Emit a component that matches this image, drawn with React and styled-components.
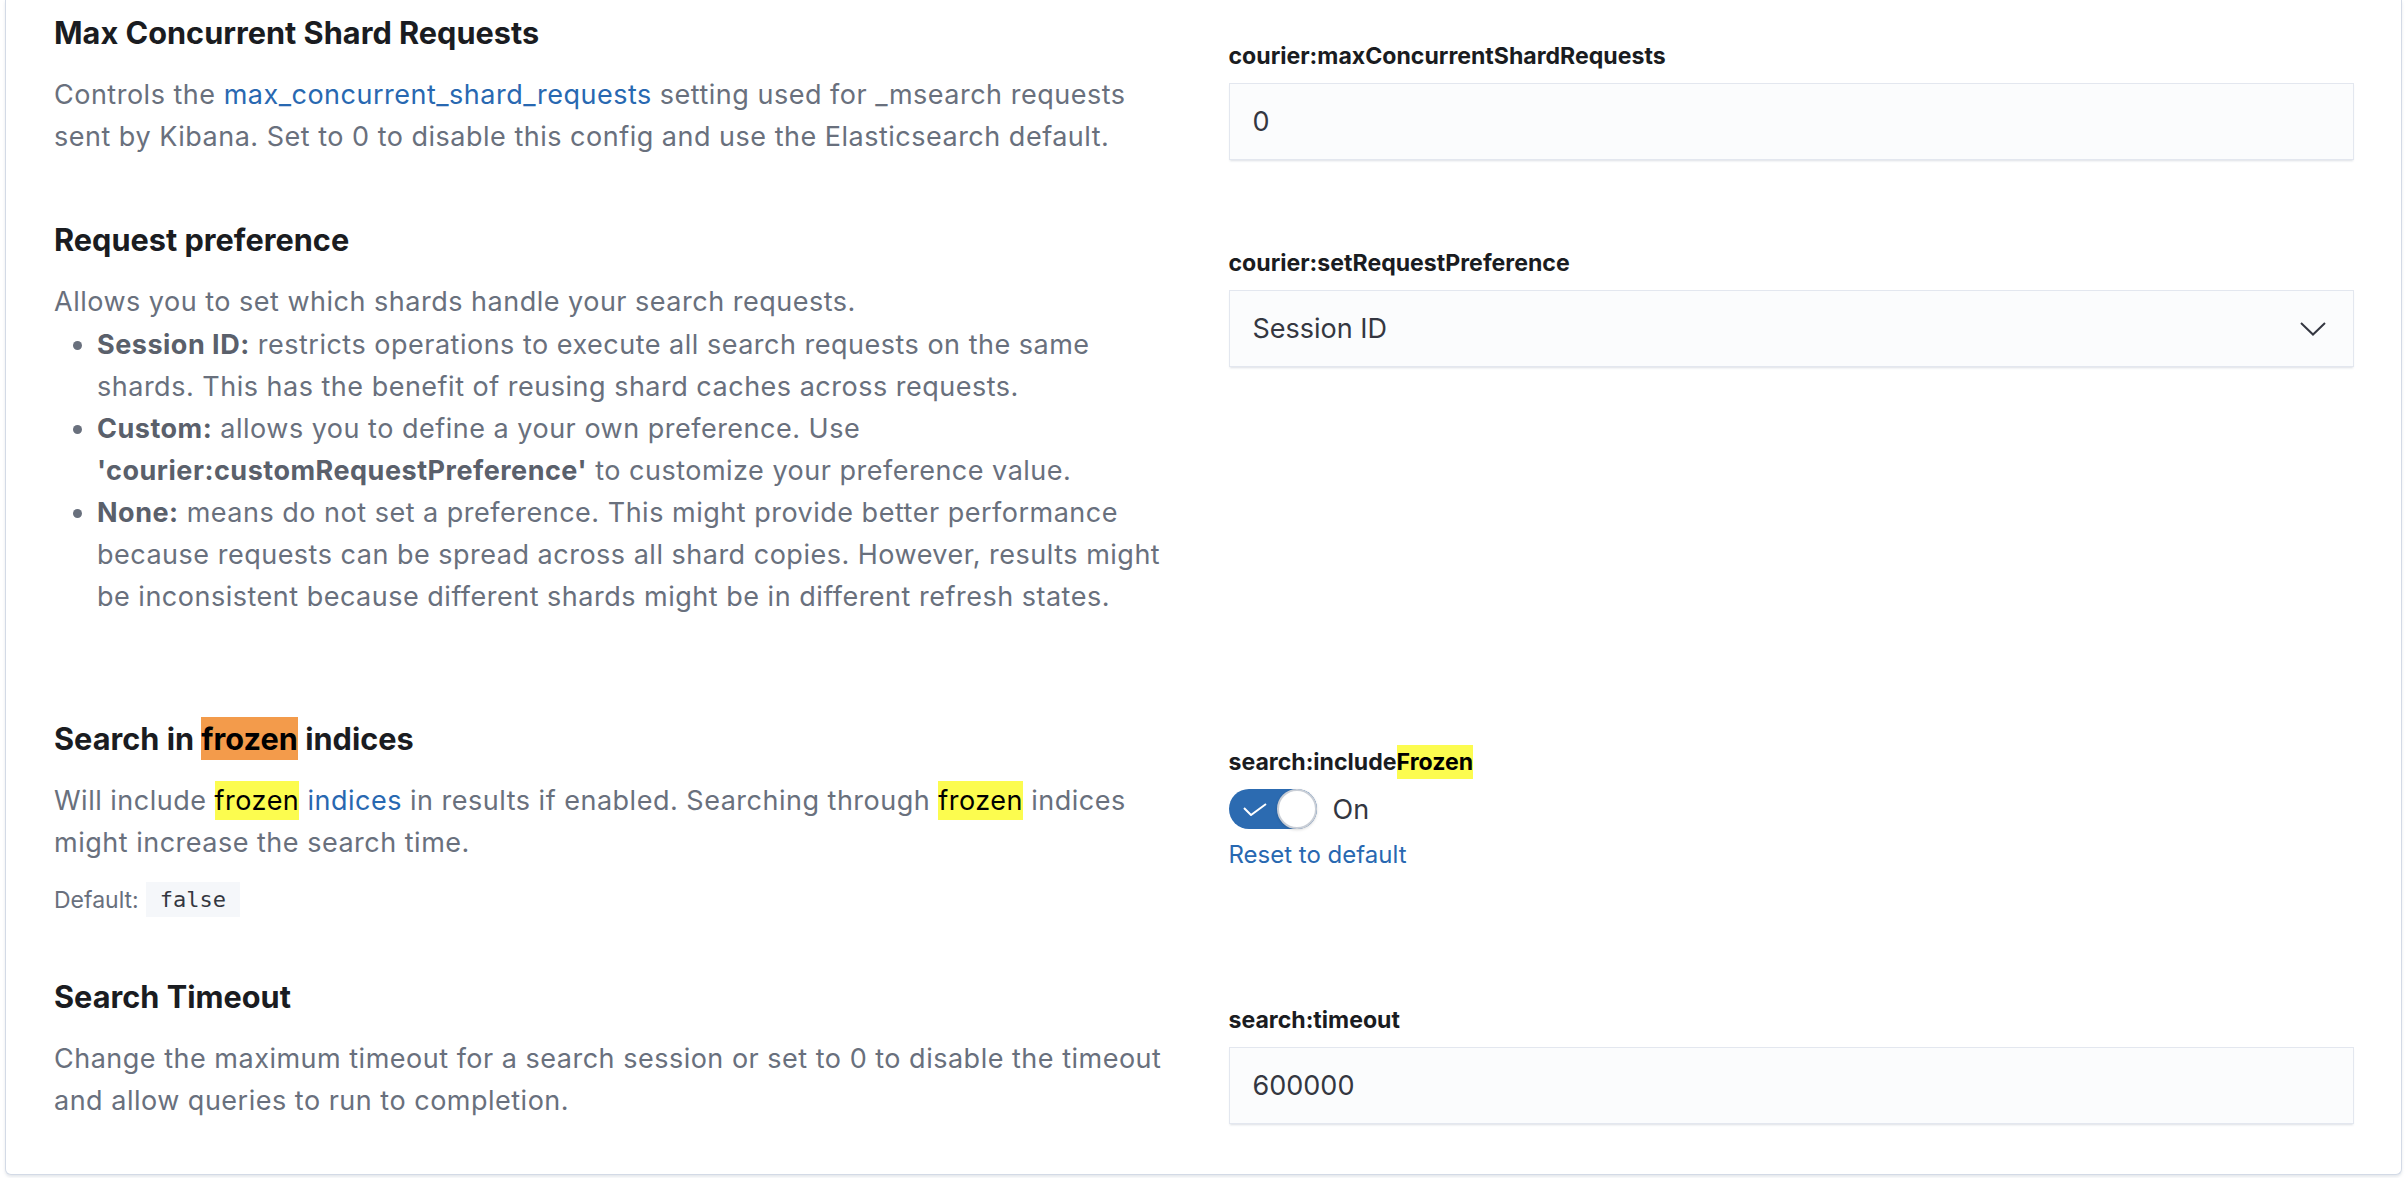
import React from "react";
import styled, { createGlobalStyle } from "styled-components";

const GlobalStyle = createGlobalStyle`
    html, body {
        margin: 0;
        padding: 0;
        background: #ffffff;
    }
    body {
        font-family: Inter, "Noto Sans", sans-serif;
        color: #343741;
    }
`;

const Page = styled.div`
    padding: 0 3px 4px 5px;
`;

const Panel = styled.div`
    border: 1px solid #d3dae6;
    border-top: none;
    border-radius: 0 0 6px 6px;
    box-shadow: 0 2px 3px rgba(152, 162, 179, 0.25);
    padding: 15px 47px 50px 48px;
    background: #fff;
`;

const Row = styled.div`
    display: grid;
    grid-template-columns: 1fr 1fr;
    column-gap: 49px;
    margin-top: ${(p) => (p.$first ? 0 : "62px")};
`;

const Left = styled.div`
    min-width: 0;
`;

const Right = styled.div`
    padding-top: 26px;
    display: flex;
    flex-direction: column;
    align-items: flex-start;
`;

const Title = styled.h3`
    margin: 0;
    font-size: 30.7px;
    line-height: 36px;
    font-weight: 700;
    color: #1a1c21;
`;

const Description = styled.div`
    margin-top: 23px;
    font-size: 27px;
    letter-spacing: 0.5px;
    line-height: 42px;
    color: #69707d;

    p {
        margin: 0;
    }
`;

const Link = styled.a`
    color: #2868b1;
    text-decoration: none;
`;

const Mark = styled.mark`
    background: ${(p) => (p.$current ? "#f39b4b" : "#fcfc4f")};
    color: #000;
    padding: 3px 0;
`;

const List = styled.ul`
    margin: 1px 0 41px;
    padding-left: 43px;

    li {
        margin: 0;
    }

    strong {
        font-weight: 700;
        color: #5a606b;
    }
`;

const DefaultLine = styled.div`
    margin-top: 18px;
    display: flex;
    align-items: center;
    gap: 7px;
    font-size: 23px;
    color: #69707d;
`;

const Code = styled.code`
    font-family: "DejaVu Sans Mono", "Liberation Mono", monospace;
    font-size: 22px;
    background: #f5f7fa;
    color: #343741;
    height: 35px;
    padding: 0 14px;
    display: inline-flex;
    align-items: center;
`;

const Label = styled.label`
    font-size: 23.1px;
    line-height: 30px;
    font-weight: 700;
    color: #1a1c21;
`;

const Field = styled.div`
    margin-top: 12px;
    align-self: stretch;
    height: 77px;
    box-sizing: border-box;
    background: #fbfcfd;
    border: 1px solid #e3e7ef;
    box-shadow: 0 2px 2px -1px rgba(152, 162, 179, 0.35);
    display: flex;
    align-items: center;
    justify-content: space-between;
    padding: 0 27px 0 23px;
    font-size: 27px;
    color: #343741;
`;

const SwitchRow = styled.div`
    margin-top: 12px;
    display: flex;
    align-items: center;
    gap: 16px;
    font-size: 27px;
    color: #343741;
`;

const Track = styled.div`
    position: relative;
    width: 88px;
    height: 40px;
    border-radius: 20px;
    background: #2c6bb1;
`;

const Knob = styled.div`
    position: absolute;
    top: 0;
    right: 0;
    width: 40px;
    height: 40px;
    box-sizing: border-box;
    border-radius: 50%;
    background: #fff;
    border: 2px solid #c9ced6;
    box-shadow: 0 1px 3px rgba(0, 0, 0, 0.15);
`;

const CheckIcon = styled.svg`
    position: absolute;
    left: 14px;
    top: 14px;
`;

const ResetLink = styled.a`
    margin-top: 10px;
    font-size: 24px;
    line-height: 32px;
    color: #2868b1;
    text-decoration: none;
`;

const Chevron = () => (
    <svg width="26" height="14" viewBox="0 0 26 14" fill="none">
        <polyline points="1,1 13,12.5 25,1" stroke="#343741" strokeWidth="2" />
    </svg>
);

const App = () => {
    return (
        <>
            <GlobalStyle />
            <Page>
                <Panel>
                    <Row $first>
                        <Left>
                            <Title>Max Concurrent Shard Requests</Title>
                            <Description>
                                <p>
                                    Controls the <Link>max_concurrent_shard_requests</Link> setting used for _msearch
                                    requests sent by Kibana. Set to 0 to disable this config and use the Elasticsearch
                                    default.
                                </p>
                            </Description>
                        </Left>
                        <Right>
                            <Label>courier:maxConcurrentShardRequests</Label>
                            <Field>0</Field>
                        </Right>
                    </Row>

                    <Row>
                        <Left>
                            <Title>Request preference</Title>
                            <Description>
                                <p>Allows you to set which shards handle your search requests.</p>
                                <List>
                                    <li>
                                        <strong>Session ID:</strong> restricts operations to execute all search requests
                                        on the same shards. This has the benefit of reusing shard caches across requests.
                                    </li>
                                    <li>
                                        <strong>Custom:</strong> allows you to define a your own preference. Use{" "}
                                        <strong>'courier:customRequestPreference'</strong> to customize your preference
                                        value.
                                    </li>
                                    <li>
                                        <strong>None:</strong> means do not set a preference. This might provide better
                                        performance because requests can be spread across all shard copies. However,
                                        results might be inconsistent because different shards might be in different
                                        refresh states.
                                    </li>
                                </List>
                            </Description>
                        </Left>
                        <Right>
                            <Label>courier:setRequestPreference</Label>
                            <Field>
                                <span>Session ID</span>
                                <Chevron />
                            </Field>
                        </Right>
                    </Row>

                    <Row>
                        <Left>
                            <Title>
                                Search in <Mark $current>frozen</Mark> indices
                            </Title>
                            <Description>
                                <p>
                                    Will include <Mark>frozen</Mark> <Link>indices</Link> in results if enabled.
                                    Searching through <Mark>frozen</Mark> indices might increase the search time.
                                </p>
                            </Description>
                            <DefaultLine>
                                Default: <Code>false</Code>
                            </DefaultLine>
                        </Left>
                        <Right>
                            <Label>
                                search:include<Mark>Frozen</Mark>
                            </Label>
                            <SwitchRow>
                                <Track>
                                    <CheckIcon width="24" height="13" viewBox="0 0 24 13" fill="none">
                                        <polyline points="1,5 8,12 23,1" stroke="#fff" strokeWidth="2" />
                                    </CheckIcon>
                                    <Knob />
                                </Track>
                                On
                            </SwitchRow>
                            <ResetLink>Reset to default</ResetLink>
                        </Right>
                    </Row>

                    <Row>
                        <Left>
                            <Title>Search Timeout</Title>
                            <Description>
                                <p>
                                    Change the maximum timeout for a search session or set to 0 to disable the timeout
                                    and allow queries to run to completion.
                                </p>
                            </Description>
                        </Left>
                        <Right>
                            <Label>search:timeout</Label>
                            <Field>600000</Field>
                        </Right>
                    </Row>
                </Panel>
            </Page>
        </>
    );
};

export default App;
